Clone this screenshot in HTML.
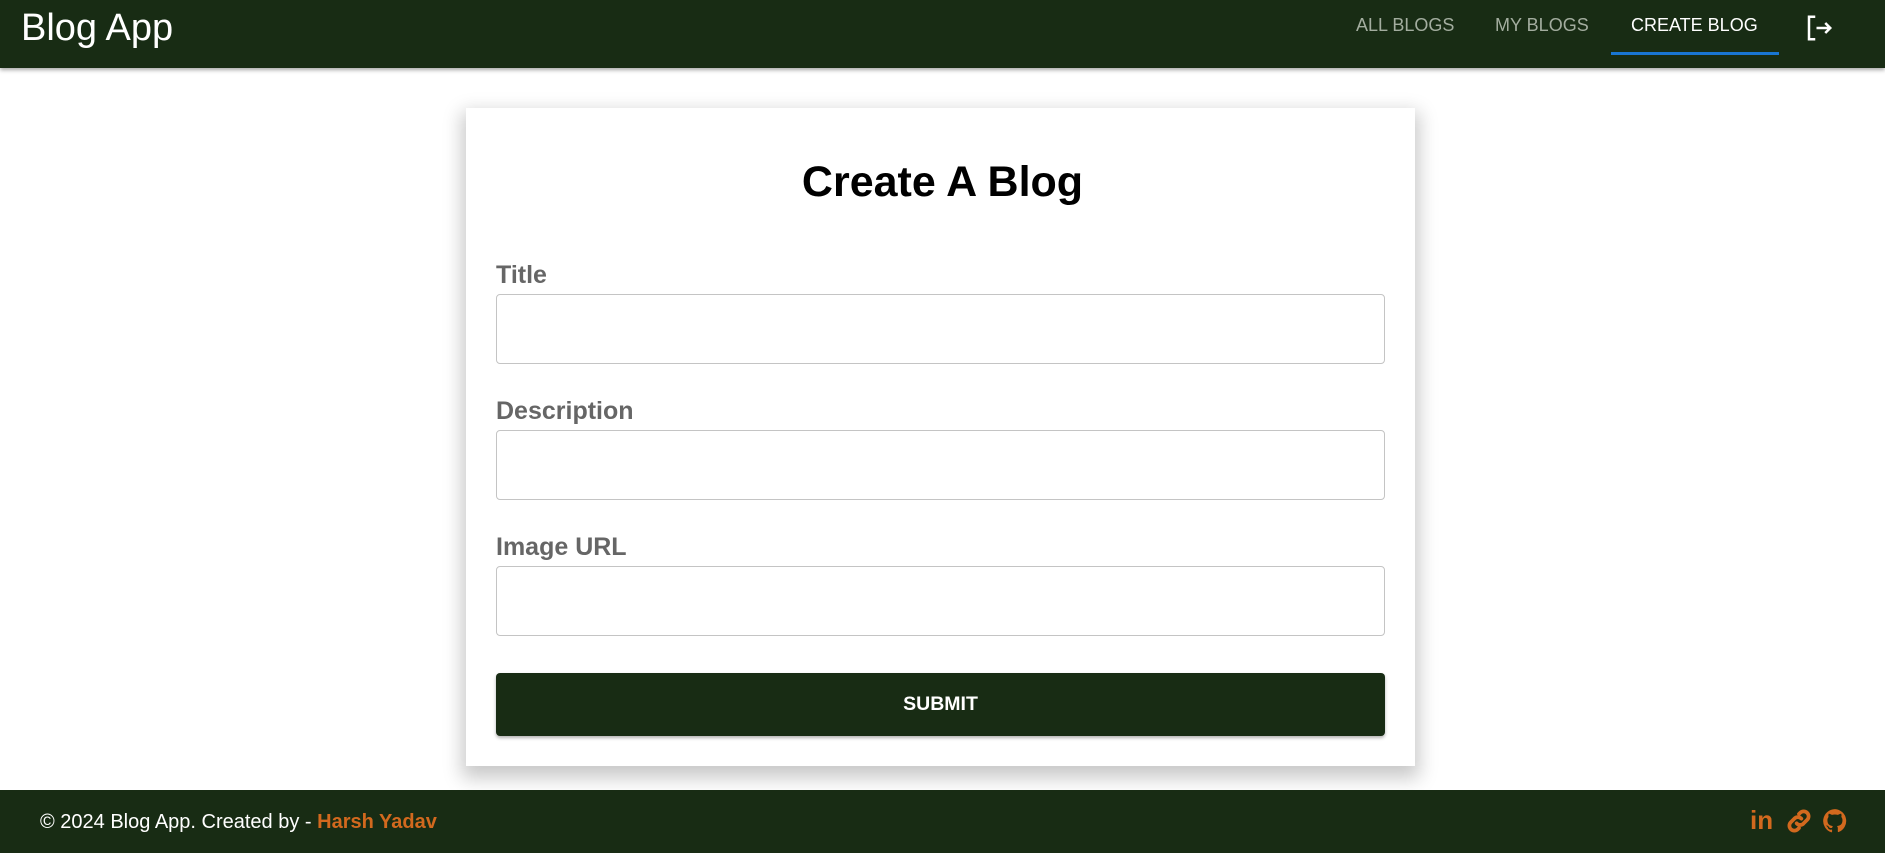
<!DOCTYPE html>
<html><head><meta charset="utf-8"><style>
*{box-sizing:border-box;margin:0;padding:0}
body{width:1885px;height:853px;overflow:hidden;background:#fff;font-family:"Liberation Sans",Arial,sans-serif;position:relative}
.hdr{position:absolute;left:0;top:0;width:1885px;height:68px;background:#182c14;box-shadow:0 2px 4px rgba(0,0,0,.35)}
.logo{position:absolute;left:21px;top:7px;font-size:38px;color:#fff}
.nav{position:absolute;top:15px;font-size:18px;color:#a3ad9f}
.ul{position:absolute;left:1611px;top:52px;width:168px;height:3px;background:#1976d2}
.card{position:absolute;left:466px;top:108px;width:949px;height:658px;background:#fff;box-shadow:0 8px 18px 4px rgba(0,0,0,.22)}
h1{position:absolute;left:0;width:100%;top:158px;text-align:center;font-size:43px;font-weight:bold;color:#000}
.lbl{position:absolute;left:496px;font-size:25px;font-weight:bold;color:#666}
.in{position:absolute;left:496px;width:889px;height:70px;border:1px solid #c4c4c4;border-radius:4px}
.btn{position:absolute;left:496px;top:673px;width:889px;height:63px;background:#182c14;border-radius:4px;color:#fff;font-weight:bold;font-size:19.5px;text-align:center;line-height:63px;box-shadow:0 2px 3px rgba(0,0,0,.3)}
.ftr{position:absolute;left:0;top:790px;width:1885px;height:63px;background:#182c14}
.ft{position:absolute;left:40px;top:21px;font-size:20px;color:#fff}
.ft b{color:#d2691e}
</style></head><body>
<div class="hdr">
<div class="logo">Blog App</div>
<div class="nav" style="left:1356px">ALL BLOGS</div>
<div class="nav" style="left:1495px">MY BLOGS</div>
<div class="nav" style="left:1631px;color:#fff">CREATE BLOG</div>
<div class="ul"></div>
<svg style="position:absolute;left:1804px;top:13px" width="30" height="30" viewBox="0 0 24 24" fill="none" stroke="#fff" stroke-width="2"><path d="M9 3H4v18h5M10 12h11M17 8l4 4-4 4"/></svg>
</div>
<div class="card"></div>
<h1>Create A Blog</h1>
<div class="lbl" style="top:261px">Title</div>
<div class="in" style="top:294px"></div>
<div class="lbl" style="top:397px">Description</div>
<div class="in" style="top:430px"></div>
<div class="lbl" style="top:533px">Image URL</div>
<div class="in" style="top:566px"></div>
<div class="btn">SUBMIT</div>
<div class="ftr">
<div class="ft">© 2024 Blog App. Created by - <b>Harsh Yadav</b></div>
<div style="position:absolute;left:1750px;top:18px;font-size:26px;font-weight:bold;color:#d2691e;line-height:25px">in</div>
<svg style="position:absolute;left:1785px;top:17px" width="28" height="28" viewBox="0 0 24 24" fill="none" stroke="#d2691e" stroke-width="3.2" stroke-linecap="round"><path d="M10 14a4 4 0 0 0 6 0l3-3a4 4 0 0 0-6-6l-1 1"/><path d="M14 10a4 4 0 0 0-6 0l-3 3a4 4 0 0 0 6 6l1-1"/></svg>
<svg style="position:absolute;left:1822px;top:18px" width="26" height="26" viewBox="0 0 24 24"><path fill="#d2691e" d="M12 1a11 11 0 0 0-3.5 21.4c.6.1.8-.2.8-.5v-2c-3.1.7-3.7-1.4-3.7-1.4-.5-1.3-1.2-1.6-1.2-1.6-1-.7.1-.7.1-.7 1.1.1 1.700 1.1 1.7 1.1 1 1.7 2.6 1.2 3.2.9.1-.7.4-1.2.7-1.5-2.5-.3-5.1-1.2-5.1-5.5 0-1.2.4-2.2 1.1-3-.1-.3-.5-1.4.1-2.9 0 0 .9-.3 3 1.1a10.5 10.5 0 0 1 5.5 0c2.1-1.4 3-1.1 3-1.1.6 1.5.2 2.6.1 2.9.7.8 1.1 1.8 1.1 3 0 4.3-2.6 5.2-5.1 5.5.4.3.8 1 .8 2v3c0 .3.2.6.8.5A11 11 0 0 0 12 1z"/></svg>
</div>
</body></html>
